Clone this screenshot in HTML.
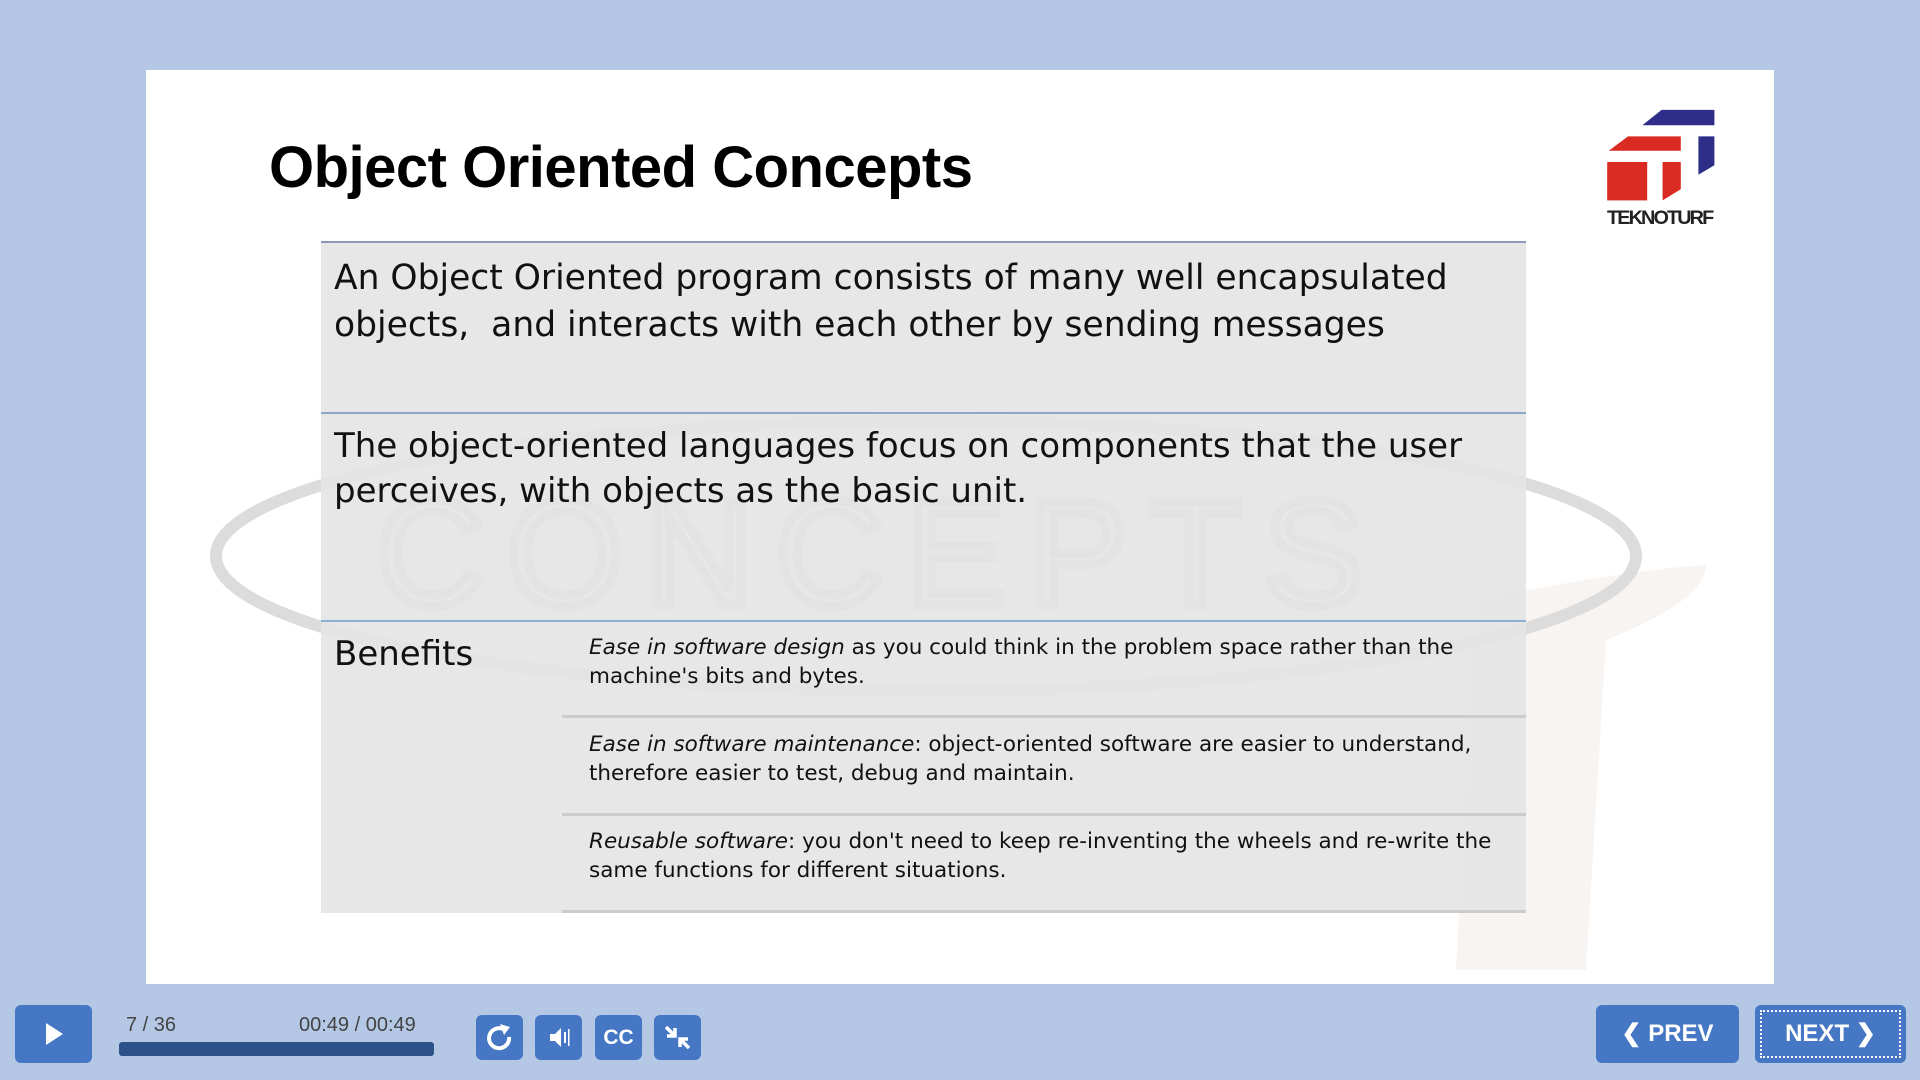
<!DOCTYPE html>
<html><head><meta charset="utf-8"><style>
*{margin:0;padding:0;box-sizing:border-box}
body{width:1920px;height:1080px;background:#b4c8e6;font-family:"Liberation Sans",sans-serif;position:relative;overflow:hidden}
.slide{position:absolute;left:146px;top:70px;width:1628px;height:914px;background:#fff;overflow:hidden}
.abs{position:absolute}
.t{font-family:"DejaVu Sans","Liberation Sans",sans-serif;color:#111}
.btn{position:absolute;background:#4577c4;border-radius:6px}
</style></head><body>
<div class="slide">
 <svg class="abs" style="left:0;top:0" width="1628" height="914">
  <path d="M1330 530 Q1480 500 1560 495 Q1560 530 1460 570 L1440 900 L1310 900 Z" fill="#f7f4f2"/>
  <ellipse cx="780" cy="486" rx="710" ry="135" fill="none" stroke="#dcdcdc" stroke-width="12"/>
  <text x="230" y="535" font-family="Liberation Sans" font-size="150" fill="none" stroke="#d8d8d8" stroke-width="9" letter-spacing="22">CONCEPTS</text>
 </svg>
 <div class="abs t" style="left:123px;top:64px;font-size:58px;font-weight:bold;font-family:'Liberation Sans',sans-serif;color:#000;letter-spacing:-0.5px">Object Oriented Concepts</div>
 <svg class="abs" style="left:1434px;top:20px" width="160" height="160" viewBox="0 0 500 500">
  <polygon points="195,110 255,62 420,62 420,110" fill="#2e2e88"/>
  <polygon points="370,145 420,145 420,235 370,265" fill="#2e2e88"/>
  <polygon points="90,190 150,145 315,145 315,190" fill="#d92b22"/>
  <rect x="85" y="225" width="125" height="120" fill="#d92b22"/>
  <polygon points="258,225 315,225 315,310 258,345" fill="#d92b22"/>
  <text x="252" y="418" text-anchor="middle" font-family="Liberation Sans" font-weight="bold" font-size="62" fill="#222" textLength="335" lengthAdjust="spacing">TEKNOTURF</text>
 </svg>
 <div class="abs" style="left:175px;top:171px;width:1205px;height:672px;background:rgba(228,228,228,0.9)"></div>
 <div class="abs" style="left:175px;top:171px;width:1205px;height:2px;background:#8a9ab8"></div>
 <div class="abs" style="left:175px;top:342px;width:1205px;height:2px;background:#8ea6c8"></div>
 <div class="abs" style="left:175px;top:550px;width:1205px;height:2px;background:#8ab0d6"></div>
 <div class="abs" style="left:416px;top:645px;width:964px;height:3px;background:#ccc"></div>
 <div class="abs" style="left:416px;top:743px;width:964px;height:3px;background:#ccc"></div>
 <div class="abs" style="left:416px;top:840px;width:964px;height:3px;background:#ccc"></div>
 <div class="abs t" style="left:188px;top:185px;font-size:34.5px;line-height:47px">An Object Oriented program consists of many well encapsulated<br>objects,&nbsp; and interacts with each other by sending messages</div>
 <div class="abs t" style="left:188px;top:354px;font-size:34px;line-height:45px">The object-oriented languages focus on components that the user<br>perceives, with objects as the basic unit.</div>
 <div class="abs t" style="left:188px;top:562px;font-size:34px;line-height:45px">Benefits</div>
 <div class="abs t" style="left:443px;top:563px;font-size:21.5px;line-height:29px"><i>Ease in software design</i> as you could think in the problem space rather than the<br>machine's bits and bytes.</div>
 <div class="abs t" style="left:443px;top:660px;font-size:21.5px;line-height:29px"><i>Ease in software maintenance</i>: object-oriented software are easier to understand,<br>therefore easier to test, debug and maintain.</div>
 <div class="abs t" style="left:443px;top:757px;font-size:21.5px;line-height:29px"><i>Reusable software</i>: you don't need to keep re-inventing the wheels and re-write the<br>same functions for different situations.</div>
</div>
<div class="btn" style="left:15px;top:1005px;width:77px;height:58px"><svg width="77" height="58"><polygon points="31,18 31,40 48,29" fill="#fff"/></svg></div>
<div class="abs" style="left:126px;top:1014px;font-size:20px;color:#444">7 / 36</div>
<div class="abs" style="left:299px;top:1014px;font-size:20px;color:#444">00:49 / 00:49</div>
<div class="abs" style="left:119px;top:1042px;width:315px;height:14px;background:#2d5189;border-radius:3px"></div>
<div class="btn" style="left:476px;top:1015px;width:47px;height:45px"><svg width="47" height="45"><path d="M27 14 A10 10 0 1 0 33 22" fill="none" stroke="#fff" stroke-width="4"/><polygon points="24,9 34,12 28,20" fill="#fff"/></svg></div>
<div class="btn" style="left:535px;top:1015px;width:47px;height:45px"><svg width="47" height="45"><polygon points="15,19 20,19 26,13 26,32 20,26 15,26" fill="#fff"/><rect x="29" y="17" width="2" height="11" fill="#fff"/><rect x="33" y="14" width="1.5" height="17" fill="#fff"/></svg></div>
<div class="btn" style="left:595px;top:1015px;width:47px;height:45px;color:#fff;font-weight:bold;font-size:21px;text-align:center;line-height:45px">CC</div>
<div class="btn" style="left:654px;top:1015px;width:47px;height:45px"><svg width="47" height="45"><path d="M12 12 L21 21 M21 13 L21 21 L13 21 M35 33 L26 24 M26 32 L26 24 L34 24" stroke="#fff" stroke-width="3.5" fill="none"/></svg></div>
<div class="btn" style="left:1596px;top:1005px;width:143px;height:58px;color:#fff;font-weight:bold;font-size:24px;line-height:58px;text-align:center">&#10094; PREV</div>
<div class="btn" style="left:1755px;top:1005px;width:151px;height:58px;color:#fff;font-weight:bold;font-size:24px;line-height:58px;text-align:center;outline:2px dotted #fff;outline-offset:-7px">NEXT &#10095;</div>
</body></html>
